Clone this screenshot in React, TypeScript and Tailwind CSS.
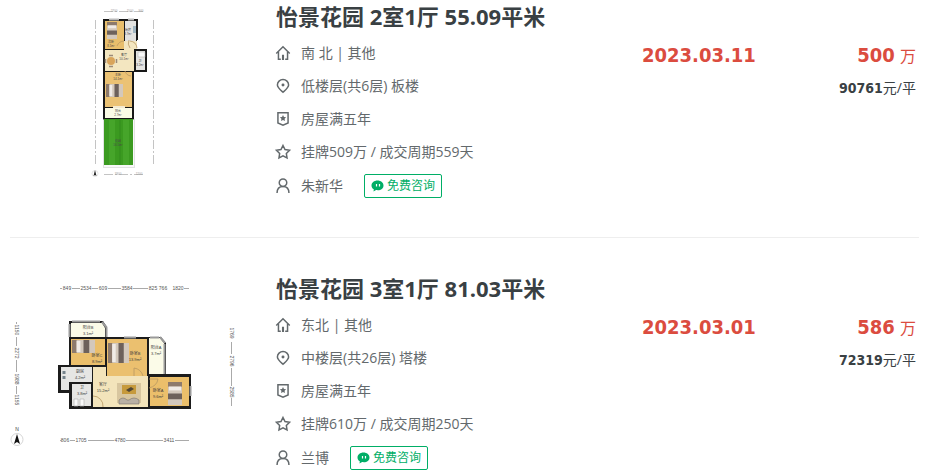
import React from 'react'

type Listing = {
    id: string
    title: string
    facing: string
    floor: string
    tenure: string
    deal: string
    agent: string
    date: string
    total: string
    unit: string
    plan: React.ReactNode
}

const Bed = ({ x, y, w, h }: { x: number; y: number; w: number; h: number }) => (
    <g>
        <rect x={x} y={y} width={w} height={h} fill="#d3c8bc" />
        <rect x={x} y={y} width={w} height={h / 5} fill="#8d7a6c" />
        <rect x={x + 1} y={y + h / 5} width={w - 2} height={h / 6} fill="#f0ebe6" />
        <rect x={x} y={y + h / 2} width={w} height={h / 4} fill="#6d615b" />
    </g>
)

const SmallPlan = () => (
    <svg viewBox="10 6 232 174" className="w-[232px] h-[174px]" role="img" aria-label="户型图">
        <g stroke="#c4c4c4" strokeWidth="1" strokeDasharray="9 2 2 2">
            <path d="M104 11.500H145M95.500 20V164M153.500 20V164M104 174.500H145" />
        </g>
        <g fill="#999999" fontSize="3" textAnchor="middle" fontFamily="Liberation Sans, sans-serif">
            <text x="114" y="12">2700</text>
            <text x="130" y="12">1500</text>
            <text x="141" y="12">900</text>
            <text x="118" y="175">3300</text>
            <text x="139" y="175">1200</text>
        </g>
        <path d="M103 19H138V40H137V49H147V72H134V120H103Z" fill="#181818" />
        <rect x="105" y="21" width="19" height="28" fill="#e8be6c" />
        <rect x="125" y="21" width="11" height="20" fill="#e2e2e0" />
        <rect x="133" y="26" width="3" height="7" fill="#9fb4c0" />
        <path d="M124 41h13v8h-3v22h-29V50h19z" fill="#f3e6c0" />
        <rect x="136" y="51" width="9" height="19" fill="#e4e4e2" />
        <rect x="138" y="52" width="7" height="5" fill="#f8f8f8" stroke="#aaaaaa" strokeWidth=".5" />
        <rect x="105" y="72" width="27" height="35" fill="#ebc274" />
        <rect x="105" y="108" width="27" height="10" fill="#fbfbe6" />
        <rect x="113" y="106" width="12" height="2" fill="#f4ead0" />
        <path d="M109 19.500h10M128 19.500h6" stroke="#bbbbbb" strokeWidth="2" />
        <path d="M130 48a8 8 0 0 1-1-8M137 48a8 8 0 0 0-7-7M117 46a8 8 0 0 1 7-5M125 71a7 7 0 0 0 6 5" fill="none" stroke="#b99863" strokeWidth=".8" />
        <Bed x={107} y={22} w={10} h={17} />
        <g transform="rotate(-90 106 97)">
            <Bed x={106} y={97} w={13} h={17} />
        </g>
        <circle cx="111" cy="61" r="4" fill="#d9a55c" />
        <path d="M105.500 59v4M116.500 59v4M109 55.500h4M109 66.500h4" stroke="#9c8a78" strokeWidth="1.500" />
        <rect x="103.500" y="119.500" width="31" height="48" fill="#f8f8f8" stroke="#c8c8c8" strokeDasharray="1 1" />
        <rect x="104" y="119" width="29" height="46" fill="#3b9a20" />
        <path d="M112 120v45M126 120v45" stroke="#46a52a" strokeWidth="6" />
        <path d="M120 120v45" stroke="#338b1c" />
        <g fill="#4a4a4a" fontSize="3" textAnchor="middle" fontFamily="Liberation Sans, Noto Sans CJK SC, sans-serif">
            <text x="111" y="43">次卧</text><text x="111" y="47">8.1m²</text>
            <text x="128" y="31">厨房</text><text x="128" y="35">3.7m²</text>
            <text x="124" y="56">客厅</text><text x="124" y="60">10.1m²</text>
            <text x="140" y="62">卫</text><text x="140" y="66">3.2m²</text>
            <text x="118" y="76">主卧</text><text x="118" y="80">14.1m²</text>
            <text x="118" y="112">阳台</text><text x="118" y="116">2.7m²</text>
            <text x="118" y="142">花园</text><text x="118" y="146">16.5m²</text>
        </g>
        <circle cx="95" cy="173.500" r="3" fill="none" stroke="#dddddd" strokeWidth=".7" />
        <path d="M95 170l1.500 6-1.500-1-1.500 1z" fill="#222222" />
    </svg>
)

const WidePlan = () => (
    <svg viewBox="10 278 232 174" className="w-[232px] h-[174px]" role="img" aria-label="户型图">
        <g fill="#555555" fontSize="5" textAnchor="middle" fontFamily="Liberation Sans, sans-serif">
            <text x="67" y="290">849</text>
            <text x="86" y="290">2534</text>
            <text x="103" y="290">609</text>
            <text x="127" y="290">3584</text>
            <text x="153" y="290">825</text>
            <text x="163" y="290">766</text>
            <text x="178" y="290">1820</text>
            <text x="65" y="442">806</text>
            <text x="81" y="442">1705</text>
            <text x="120" y="442">4780</text>
            <text x="169" y="442">3411</text>
            <g transform="rotate(90 15 330)"><text x="15" y="330">1150</text></g>
            <g transform="rotate(90 15 353)"><text x="15" y="353">2272</text></g>
            <g transform="rotate(90 15 379)"><text x="15" y="379">1988</text></g>
            <g transform="rotate(90 15 400)"><text x="15" y="400">1155</text></g>
            <g transform="rotate(90 230 333)"><text x="230" y="333">1769</text></g>
            <g transform="rotate(90 230 361)"><text x="230" y="361">2796</text></g>
            <g transform="rotate(90 230 392)"><text x="230" y="392">2585</text></g>
        </g>
        <path d="M60 288.500h2M72 288.500h8M92 288.500h6M108 288.500h13M133 288.500h15M184 288.500h5M60 440.500h2M70 440.500h5M88 440.500h26M126 440.500h37M175 440.500h14M16.500 322v2M16.500 337v9M16.500 360v12M16.500 386v8M231.500 342v12M231.500 368v18M231.500 398v8" stroke="#aaaaaa" />
        <path d="M69 321h34l4 6v10h54l5 6v31h25v35H69v-16H58v-28h11z" fill="#1c1c1c" />
        <path d="M71 323h31l3 5v9H71z" fill="#fbfbe8" />
        <rect x="71" y="339" width="34" height="26" fill="#ebbf6b" />
        <rect x="107" y="339" width="40" height="37" fill="#ebc06f" />
        <path d="M149 338h11l4 5v31h-15z" fill="#fbfbe8" />
        <path d="M93 367h13v9h42v31H93z" fill="#f3e4bb" />
        <path d="M61 367h31v15H69v8h-8z" fill="#e6e6e4" />
        <rect x="72" y="384" width="19" height="22" fill="#e6e6e4" />
        <rect x="150" y="377" width="39" height="29" fill="#ebbf6b" />
        <path d="M69.500 324v13M106.500 328v9M164.500 344v30M190.500 386v10M102 322l5 6M160 337l5 6M72 321.500h28M124 337.500h12M150 337.500h9" stroke="#9a9a9a" strokeWidth="2" />
        <g transform="rotate(-90 72 353)">
            <Bed x={72} y={353} w={13} h={23} />
        </g>
        <g transform="rotate(-90 108 363)">
            <Bed x={108} y={363} w={20} h={21} />
        </g>
        <Bed x={168} y={382} w={14} h={23} />
        <rect x="117" y="383" width="24" height="20" fill="#d8c69f" />
        <rect x="122" y="385" width="14" height="9" fill="#c69a3d" />
        <path d="M126 390l5-3 3 2-5 3z" fill="#514735" />
        <path d="M119 404v-4q4-4 8 0h2q5-4 10 0v4z" fill="#b9b0a5" stroke="#77716a" strokeWidth=".6" />
        <path d="M64 371v8" stroke="#75838b" strokeWidth="3" strokeDasharray="3 2" />
        <path d="M74 399h4v7h-4zM80 399h4v7h-4z" fill="#fafafa" stroke="#b5b5b5" strokeWidth=".7" />
        <path d="M93 396a10 10 0 0 1 10 11M149 379h9q-1 7-9 9M134 376v-8q7 1 9 8" fill="none" stroke="#b79862" strokeWidth=".8" />
        <g fill="#3e3e3e" fontSize="4" textAnchor="middle" fontFamily="Liberation Sans, Noto Sans CJK SC, sans-serif">
            <text x="88" y="329">阳台B</text><text x="88" y="335">3.1m²</text>
            <text x="97" y="357">卧室C</text><text x="97" y="363">8.9m²</text>
            <text x="135" y="355">卧室B</text><text x="135" y="361">13.9m²</text>
            <text x="156" y="349">阳台A</text><text x="156" y="355">3.7m²</text>
            <text x="80" y="373">厨房</text><text x="80" y="379">4.2m²</text>
            <text x="82" y="389">卫</text><text x="82" y="395">3.8m²</text>
            <text x="103" y="386">客厅</text><text x="103" y="392">15.2m²</text>
            <text x="158" y="392">卧室A</text><text x="158" y="398">9.6m²</text>
            <text x="17" y="431" fontSize="5">N</text>
        </g>
        <circle cx="17" cy="439.500" r="6" fill="none" stroke="#cccccc" strokeWidth=".8" />
        <path d="M17 434l3 10-3-2-3 2z" fill="#111111" />
    </svg>
)

const icons = {
    house: (
        <>
            <path d="M.3 8.500 8 .8l7.700 7.700" />
            <path d="M2.800 6.500v8.700h2.700M13.200 6.500v8.700h-2.700" />
            <path d="M8 10v6" strokeWidth="2.400" />
        </>
    ),
    pin: (
        <>
            <path d="M8 15.200C4.500 12 1.600 9.600 1.600 6.800a6.400 6.200 0 0 1 12.800 0C14.400 9.600 11.500 12 8 15.200Z" />
            <circle cx="8" cy="6.800" r="1.700" fill="currentColor" stroke="none" />
        </>
    ),
    badge: (
        <>
            <path d="M2.200.8h11.600v11.800L8 15l-5.800-2.400z" />
            <path d="m8 3.500 1.100 2.300 2.500.3-1.800 1.700.4 2.500L8 9.100l-2.200 1.200.4-2.500-1.800-1.700 2.500-.3z" fill="currentColor" stroke="none" />
        </>
    ),
    star: <path d="m8 .6 2.300 4.600 5.200.8-3.700 3.600.8 5.200L8 12.400l-4.600 2.400.8-5.200L.5 6l5.200-.8z" />,
    user: (
        <>
            <circle cx="8" cy="4.200" r="4.300" />
            <path d="M1.200 16c0-4.800 2.300-7.500 6.800-7.500s6.800 2.700 6.800 7.500" />
        </>
    ),
}

const Icon = ({ name }: { name: keyof typeof icons }) => (
    <span className="w-[25px] shrink-0">
        <svg viewBox="0 0 16 16" fill="none" stroke="currentColor" strokeWidth="1.700" className="size-3.5 overflow-visible" aria-hidden="true">
            {icons[name]}
        </svg>
    </span>
)

const Row = ({ icon, children }: { icon: keyof typeof icons; children: React.ReactNode }) => (
    <li className="flex h-[33px] items-center">
        <Icon name={icon} />
        {children}
    </li>
)

const listings: Listing[] = [
    {
        id: '1',
        title: '怡景花园 2室1厅 55.09平米',
        facing: '南 北 | 其他',
        floor: '低楼层(共6层) 板楼',
        tenure: '房屋满五年',
        deal: '挂牌509万 / 成交周期559天',
        agent: '朱新华',
        date: '2023.03.11',
        total: '500',
        unit: '90761',
        plan: <SmallPlan />,
    },
    {
        id: '2',
        title: '怡景花园 3室1厅 81.03平米',
        facing: '东北 | 其他',
        floor: '中楼层(共26层) 塔楼',
        tenure: '房屋满五年',
        deal: '挂牌610万 / 成交周期250天',
        agent: '兰博',
        date: '2023.03.01',
        total: '586',
        unit: '72319',
        plan: <WidePlan />,
    },
]

const Card = ({ item }: { item: Listing }) => (
    <li className="flex pt-[34px] pb-[39px] border-b border-[#eeeeee] first:pt-0 last:border-0 last:pb-0">
        <a href="#" className="mt-1.5 mr-[34px] shrink-0">
            {item.plan}
        </a>

        <div className="flex-1 min-w-0">
            <h2 className="text-[22px] leading-8 font-bold text-[#394043] whitespace-nowrap">
                <a href="#">{item.title}</a>
            </h2>

            <div className="flex">
                <div className="flex-1 pt-1 text-sm text-[#63696c]">
                    <ul>
                        <Row icon="house">{item.facing}</Row>
                        <Row icon="pin">{item.floor}</Row>
                        <Row icon="badge">{item.tenure}</Row>
                        <Row icon="star">{item.deal}</Row>
                    </ul>
                    <div className="mt-1.5 flex h-6 items-center">
                        <Icon name="user" />
                        {item.agent}
                        <button className="ml-[21px] flex h-6 items-center gap-[3px] rounded-xs border border-[#00ae66] px-1.5 text-xs text-[#00ae66]">
                            <svg viewBox="0 0 13 12" className="h-3 w-[13px]" aria-hidden="true">
                                <path d="M6.500.5C3 .5.500 2.700.500 5.400c0 1.700.9 3 2.300 3.900L2.500 11.500l2.600-1.400c4.300.8 7.400-1.600 7.400-4.700C12.500 2.700 10 .5 6.500.5Z" fill="currentColor" />
                                <path d="M5.500 4v2.500M8.500 4v2.500" stroke="white" strokeWidth="1.200" />
                            </svg>
                            免费咨询
                        </button>
                    </div>
                </div>

                <div className="w-[114px] pt-2 font-['DejaVu_Sans_Condensed','Noto_Sans',sans-serif] text-xl leading-[30px] font-bold text-[#db4c3f]">
                    {item.date}
                </div>

                <div className="w-40 pt-2 mr-[3px] text-right font-['DejaVu_Sans_Condensed','Noto_Sans_CJK_SC',sans-serif]">
                    <p className="h-[30px] text-lg leading-[30px] font-light text-[#db4c3f]">
                        <span className="text-xl leading-[30px] font-bold">{item.total}</span> <span className="font-['Noto_Sans_CJK_SC',sans-serif] text-base leading-[30px] font-normal">万</span>
                    </p>
                    <p className="mt-1 text-sm leading-7 text-[#394043]">
                        <span className="font-bold">{item.unit}</span>
                        <span className="font-['Open_Sans','Noto_Sans_CJK_SC',sans-serif]">元/平</span>
                    </p>
                </div>
            </div>
        </div>
    </li>
)

export default function App() {
    return (
        <main className="bg-white pl-2.5 pr-4 font-['Open_Sans','Noto_Sans_CJK_SC',sans-serif]">
            <ul>
                {listings.map((item) => (
                    <Card key={item.id} item={item} />
                ))}
            </ul>
        </main>
    )
}
